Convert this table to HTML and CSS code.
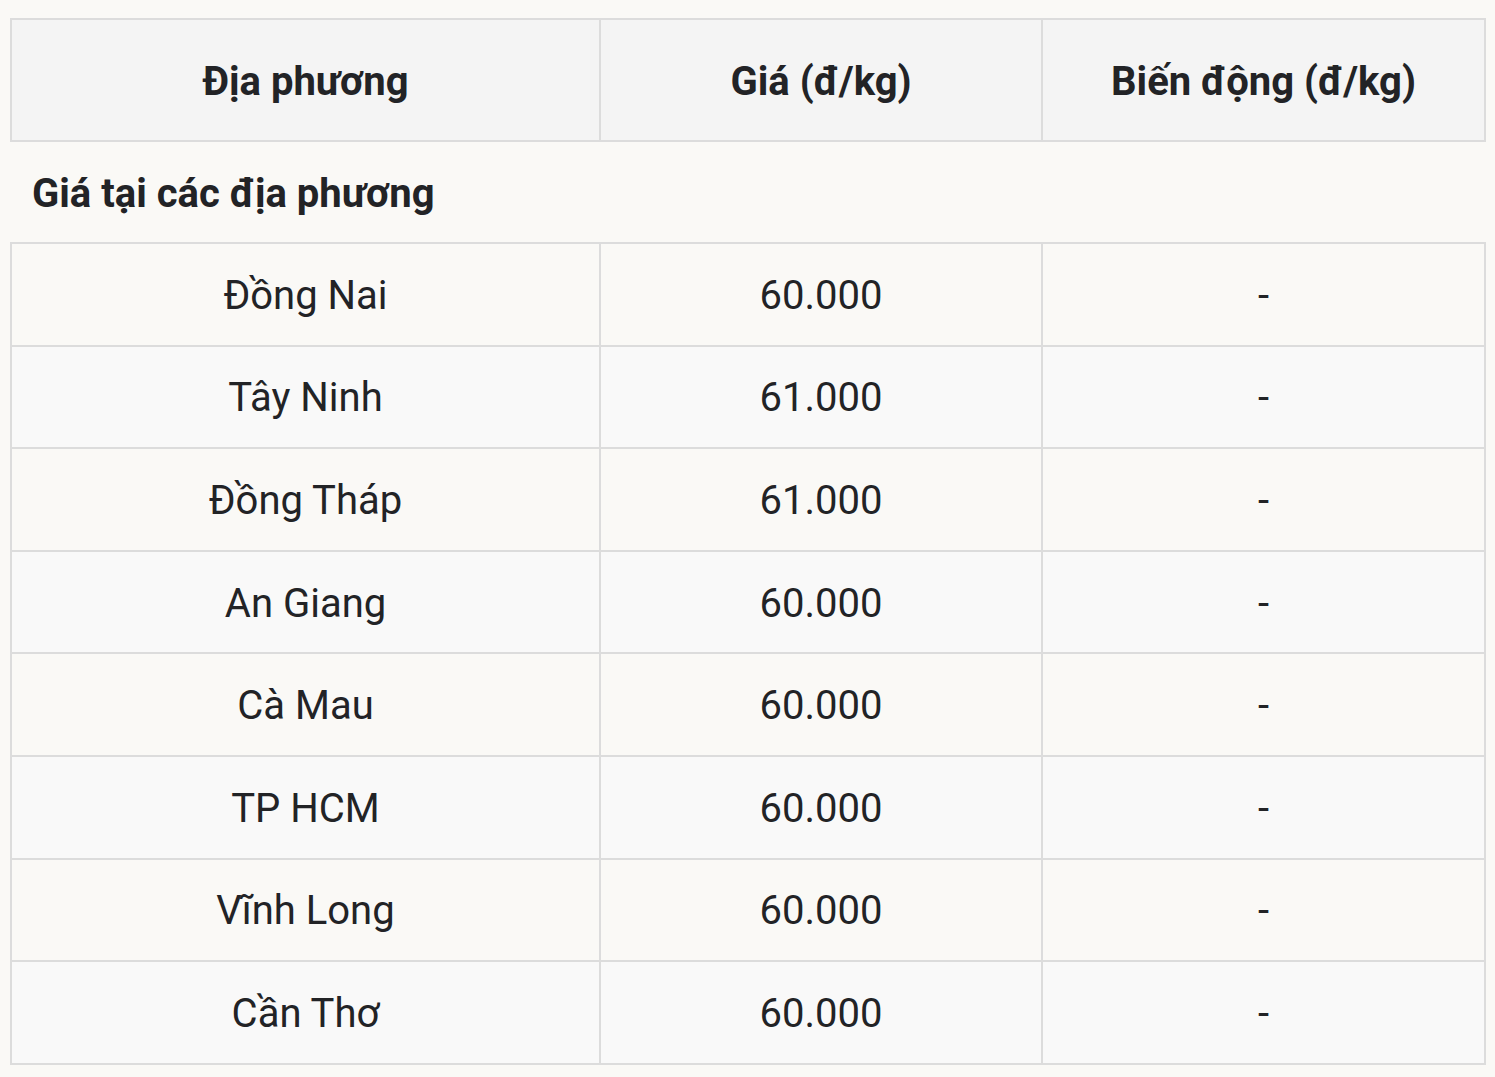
FILE: index.html
```html
<!DOCTYPE html>
<html lang="vi">
<head>
<meta charset="utf-8">
<title>Giá tại các địa phương</title>
<link rel="stylesheet" href="styles.css">
</head>
<body>
<table class="price-table">
  <colgroup>
    <col class="col-place">
    <col class="col-price">
    <col class="col-change">
  </colgroup>
  <thead>
    <tr class="head-row">
      <th>Địa phương</th>
      <th>Giá (đ/kg)</th>
      <th>Biến động (đ/kg)</th>
    </tr>
  </thead>
  <tbody>
    <tr class="section-row"><td colspan="3">Giá tại các địa phương</td></tr>
    <tr class="data-row"><td>Đồng Nai</td><td>60.000</td><td>-</td></tr>
    <tr class="data-row"><td>Tây Ninh</td><td>61.000</td><td>-</td></tr>
    <tr class="data-row"><td>Đồng Tháp</td><td>61.000</td><td>-</td></tr>
    <tr class="data-row"><td>An Giang</td><td>60.000</td><td>-</td></tr>
    <tr class="data-row"><td>Cà Mau</td><td>60.000</td><td>-</td></tr>
    <tr class="data-row"><td>TP HCM</td><td>60.000</td><td>-</td></tr>
    <tr class="data-row"><td>Vĩnh Long</td><td>60.000</td><td>-</td></tr>
    <tr class="data-row"><td>Cần Thơ</td><td>60.000</td><td>-</td></tr>
  </tbody>
</table>
</body>
</html>
```
FILE: styles.css
```css
html, body {
  background: #faf9f6;
}
body {
  margin: 0;
  padding: 18px 10px 0 10px;
  font-family: Roboto, "Noto Sans", Arial, sans-serif;
  color: #222326;
}
.price-table {
  border-collapse: collapse;
  width: 1474px;
  table-layout: fixed;
  font-size: 40px;
}
.col-place { width: 589px; }
.col-price { width: 442px; }
.col-change { width: 443px; }
.price-table th,
.price-table td {
  border: 2px solid #dcdcdc;
  text-align: center;
  vertical-align: middle;
  padding: 3px 0 0 0;
  line-height: 1.2;
}
.head-row th {
  background: #f4f4f4;
  font-weight: 700;
  height: 117px;
}
.section-row td {
  border-left: none;
  border-right: none;
  background: #faf9f6;
  text-align: left;
  font-weight: 700;
  padding-left: 21px;
  height: 97px;
}
.data-row td {
  height: 97.6px;
  font-weight: 400;
}
.data-row:nth-child(even) td { background: #faf9f6; }
.data-row:nth-child(odd) td { background: #f9f9f9; }
```
